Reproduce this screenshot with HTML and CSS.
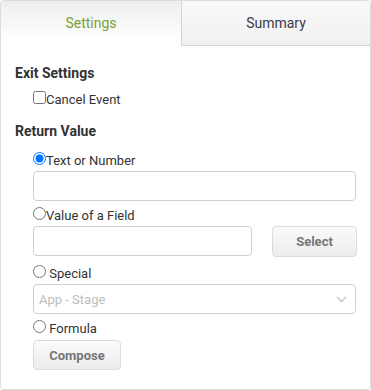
FILE: index.html
```html
<!DOCTYPE html>
<html>
<head>
<meta charset="utf-8">
<link rel="stylesheet" href="styles.css">
</head>
<body>
<div class="panel">
  <div class="tabs">
    <div class="tab active">Settings</div>
    <div class="tab">Summary</div>
  </div>
  <div class="content">
    <div class="heading">Exit Settings</div>
    <label class="opt check-row"><input type="checkbox" class="ctl">Cancel Event</label>
    <div class="heading heading2">Return Value</div>
    <div class="options">
      <label class="opt"><input type="radio" name="rv" class="ctl" checked>Text or Number</label>
      <input type="text" class="field full">
      <label class="opt"><input type="radio" name="rv" class="ctl">Value of a Field</label>
      <div class="field-row">
        <input type="text" class="field short">
        <button class="btn select-btn" type="button">Select</button>
      </div>
      <label class="opt"><input type="radio" name="rv" class="ctl"> Special</label>
      <div class="dropdown">
        <span class="placeholder">App - Stage</span>
        <svg class="chev" width="11" height="7" viewBox="0 0 11 7"><path d="M1 1 L5.5 5.5 L10 1" fill="none" stroke="#c4c4c4" stroke-width="1.4"/></svg>
      </div>
      <label class="opt opt-low"><input type="radio" name="rv" class="ctl"> Formula</label>
      <div><button class="btn compose-btn" type="button">Compose</button></div>
    </div>
  </div>
</div>
</body>
</html>
```
FILE: styles.css
```css
html, body {
  margin: 0;
  padding: 0;
  background: #fff;
}
body {
  font-family: Roboto, "Liberation Sans", sans-serif;
  color: #333;
}
.panel {
  width: 371px;
  height: 390px;
  box-sizing: border-box;
  border: 1px solid #dcdcdc;
  border-radius: 4px;
  overflow: hidden;
}
.tabs {
  display: flex;
  height: 45px;
}
.tab {
  flex: 1;
  box-sizing: border-box;
  display: flex;
  align-items: center;
  justify-content: center;
  font-size: 14px;
  color: #3a3a4a;
  background: linear-gradient(#f9f9f9, #f0f0f0);
  border-left: 1px solid #d4d4d4;
  border-bottom: 1px solid #d4d4d4;
  border-top-right-radius: 4px;
  padding-bottom: 1px;
}
.tab.active {
  flex: 0 0 180px;
  color: #76a336;
  background: linear-gradient(#eeeeee, #ffffff 90%);
  border: none;
  border-radius: 0;
}
.content {
  padding: 17px 0 0 14px;
}
.heading {
  font-size: 14px;
  font-weight: bold;
  line-height: 20px;
  color: #333;
}
.heading2 {
  margin-top: 11px;
}
.opt {
  display: block;
  height: 20px;
  line-height: 20px;
  font-size: 13px;
  color: #333;
  margin-left: 18px;
  white-space: pre;
}
.check-row {
  margin-top: 7px;
}
.ctl {
  margin: 1px 0 0 0;
  width: 13px;
  height: 13px;
  vertical-align: top;
}
.options {
  margin-top: 10px;
  margin-left: 18px;
  display: flex;
  flex-direction: column;
  align-items: flex-start;
}
.options .opt {
  margin-left: 0;
}
.field {
  box-sizing: border-box;
  height: 30px;
  border: 1px solid #cfcfcf;
  border-radius: 4px;
  background: #fff;
  margin: 0;
  padding: 0 6px;
  font: 13px Roboto, sans-serif;
}
.full {
  width: 323px;
  margin-bottom: 5px;
}
.field-row {
  display: flex;
  gap: 20px;
  margin-bottom: 7px;
}
.short {
  width: 219px;
}
.btn {
  box-sizing: border-box;
  height: 30px;
  border: 1px solid #dcdcdc;
  border-radius: 4px;
  background: linear-gradient(#fafafa, #ececec);
  color: #777;
  font: bold 13px Roboto, sans-serif;
  padding: 0;
  margin: 0;
}
.select-btn {
  width: 85px;
  height: 31px;
}
.compose-btn {
  width: 88px;
}
.dropdown {
  box-sizing: border-box;
  width: 323px;
  height: 30px;
  border: 1px solid #cfcfcf;
  border-radius: 4px;
  display: flex;
  align-items: center;
  justify-content: space-between;
  padding: 0 8px 0 5px;
  margin-bottom: 5px;
}
.placeholder {
  font-size: 13px;
  color: #bdbdbd;
}
.chev {
  display: block;
}
.opt-low {
  margin-bottom: 1px;
}
```
